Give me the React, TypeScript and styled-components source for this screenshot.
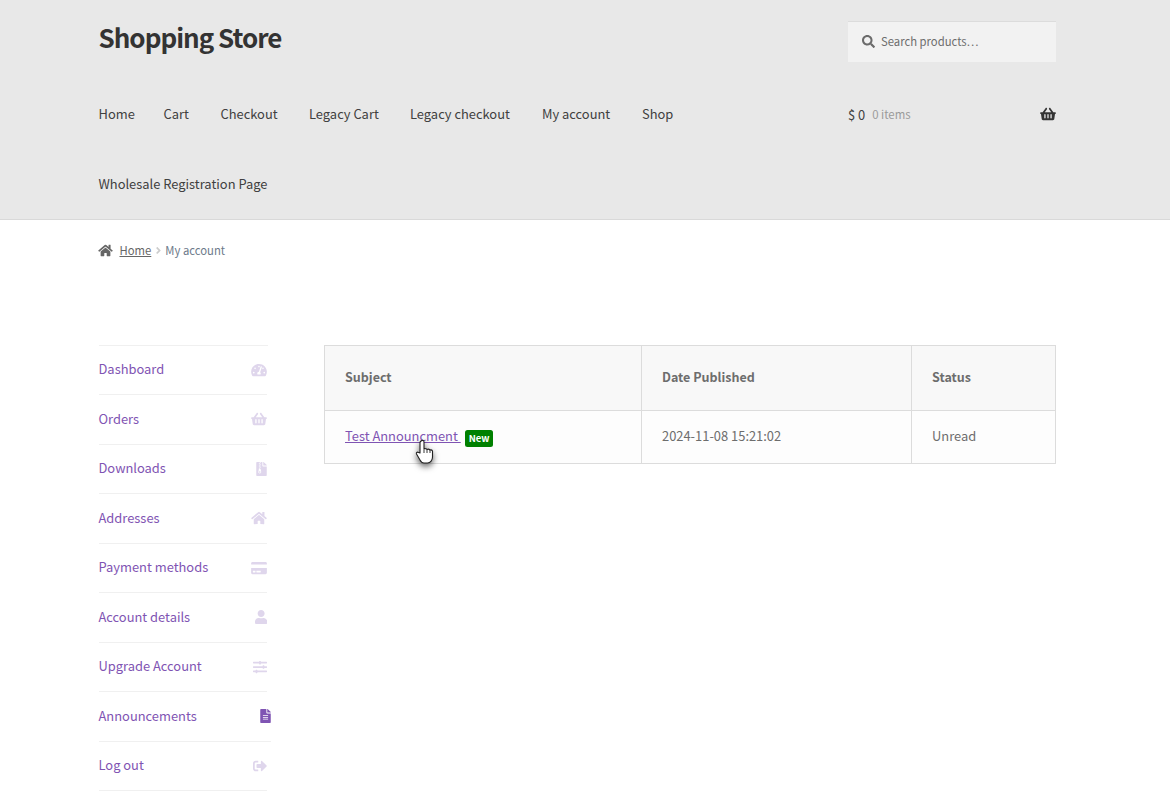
import React from "react";
import styled, { createGlobalStyle } from "styled-components";
import { FaTachometerAlt, FaShoppingBasket, FaFileArchive, FaHome, FaCreditCard, FaUser, FaSlidersH, FaFileAlt, FaSignOutAlt, FaSearch, FaAngleRight } from "react-icons/fa";

const Global = createGlobalStyle`
  html, body { margin: 0; padding: 0; background: #fff; }
  body { font-family: "Noto Sans CJK SC", "Noto Sans", sans-serif; color: #6d6d6d; font-size: 13px; }
  a { text-decoration: none; color: inherit; }
`;

const Page = styled.div`width: 1170px; height: 808px; overflow: hidden;`;
const Header = styled.header`
  height: 219px; background: #e8e8e8; border-bottom: 1px solid #d9d9d9;
  padding: 0 114px 0 98.500px; display: flex; flex-direction: column;
`;
const TopRow = styled.div`display: flex; justify-content: space-between; padding-top: 21px; height: 79px;`;
const Title = styled.div`font-size: 26px; font-weight: 700; letter-spacing: -1px; color: #333; line-height: 34px; margin-top: -1px;`;
const Search = styled.div`
  width: 208px; height: 41px; box-sizing: border-box; background: #f2f2f2; border-top: 1px solid #dcdcdc;
  display: flex; align-items: center; gap: 6px; padding: 0 0 2px 14px; font-size: 11.300px; color: #6d6d6d;
  svg { width: 13px; height: 13px; color: #6b6b6b; }
`;
const NavArea = styled.div`display: flex; justify-content: space-between;`;
const Nav = styled.nav`width: 700px; display: flex; flex-wrap: wrap; margin-top: -5px;`;
const NavItem = styled.a<{ $w: number }>`
  width: ${p => p.$w}px; height: 70px; line-height: 70px; font-size: 12.900px; color: #404040; white-space: nowrap;
`;
const Cart = styled.div`
  width: 208px; height: 70px; margin-top: -5px; display: flex; align-items: center; color: #404040; font-size: 12.900px;
  svg { width: 16px; height: 14px; color: #333; margin-left: auto; }
`;
const Count = styled.span`font-size: 11.400px; color: #9a9a9a; margin-left: 7px;`;
const Crumbs = styled.div`
  height: 125px; padding: 20px 98px 0; box-sizing: border-box; display: flex; align-items: flex-start; font-size: 11.300px; color: #6d7a8a; line-height: 20px;
`;
const CrumbIcon = styled.span`
  display: inline-flex; width: 21.500px; height: 20px; align-items: center; color: #666;
  svg { width: 15px; height: 13px; }
`;
const CrumbLink = styled.a`color: #666; text-decoration: underline;`;
const CrumbSep = styled.span`
  display: inline-flex; width: 14px; height: 20px; align-items: center; justify-content: center; color: #ccc;
  svg { width: 9px; height: 11px; }
`;
const Main = styled.div`display: flex; align-items: flex-start; padding: 0 114px 0 98.500px; gap: 56px;`;
const Side = styled.ul`list-style: none; margin: -0.4px 0 0; padding: 0; width: 169.500px; flex: none; border-top: 1px solid #f0f0f0;`;
const SideRow = styled.li<{ $active?: boolean }>`
  height: 48.500px; border-bottom: 1px solid #f0f0f0; display: flex; align-items: center; justify-content: space-between;
  font-size: 12.900px; color: #7f54b3; white-space: nowrap; margin-right: ${p => (p.$active ? "-3px" : "1px")};
`;
const SideLabel = styled.span`padding-bottom: 2px;`;
const SideIcon = styled.span<{ $w: number; $active?: boolean }>`
  display: flex; color: ${p => (p.$active ? "#7f54b3" : "#dfd6ec")};
  svg { width: ${p => p.$w}px; height: 14px; }
`;
const Table = styled.table`
  width: 731px; height: 119px; flex: none; border-collapse: collapse; table-layout: fixed; border: 1px solid #dcdcdc; font-size: 12.900px;
`;
const Th = styled.th<{ $w: number }>`
  width: ${p => p.$w}px; height: 65px; box-sizing: border-box; background: #f8f8f8; border: 1px solid #dcdcdc; text-align: left; padding: 0 20px 4px; font-weight: 600; font-size: 12.500px; color: #6d6d6d;
`;
const Td = styled.td`background: #fdfdfd; border: 1px solid #dcdcdc; padding: 0 20px 3px; color: #6d6d6d; position: relative;`;
const TitleLink = styled.a`color: #7f54b3; text-decoration: underline; white-space: pre;`;
const Badge = styled.span`
  display: inline-block; background: #008000; color: #fff; font-size: 9.500px; font-weight: 700; line-height: 17px; height: 17px; padding: 0 3.500px; border-radius: 2.500px; margin: -4px 0 -4px 4.500px; vertical-align: -0.5px;
`;
const Pointer = styled.svg`position: absolute; left: 90px; top: 28px; width: 20px; height: 26px; filter: drop-shadow(0 3px 3px rgba(0,0,0,.6));`;

const items: [string, React.ReactNode, number, boolean?][] = [
  ["Dashboard", <FaTachometerAlt />, 16],
  ["Orders", <FaShoppingBasket />, 16],
  ["Downloads", <FaFileArchive />, 11],
  ["Addresses", <FaHome />, 16],
  ["Payment methods", <FaCreditCard />, 16],
  ["Account details", <FaUser />, 12.250],
  ["Upgrade Account", <FaSlidersH />, 14],
  ["Announcements", <FaFileAlt />, 11, true],
  ["Log out", <FaSignOutAlt />, 14],
];
const nav: [string, number][] = [["Home", 65], ["Cart", 57], ["Checkout", 88.500], ["Legacy Cart", 101], ["Legacy checkout", 132], ["My account", 100], ["Shop", 100], ["Wholesale Registration Page", 300]];

export default function App() {
  return (
    <Page>
      <Global />
      <Header>
        <TopRow>
          <Title>Shopping Store</Title>
          <Search><FaSearch /><span>Search products…</span></Search>
        </TopRow>
        <NavArea>
          <Nav>{nav.map(([t, w]) => <NavItem key={t} $w={w}>{t}</NavItem>)}</Nav>
          <Cart><span>$ 0</span><Count>0 items</Count><FaShoppingBasket /></Cart>
        </NavArea>
      </Header>
      <Crumbs>
        <CrumbIcon><FaHome /></CrumbIcon>
        <CrumbLink>Home</CrumbLink>
        <CrumbSep><FaAngleRight /></CrumbSep>
        <span>My account</span>
      </Crumbs>
      <Main>
        <Side>
          {items.map(([t, ic, w, a]) => (
            <SideRow key={t} $active={a}><SideLabel>{t}</SideLabel><SideIcon $w={w} $active={a}>{ic}</SideIcon></SideRow>
          ))}
        </Side>
        <Table>
          <thead>
            <tr><Th $w={317}>Subject</Th><Th $w={270}>Date Published</Th><Th $w={144}>Status</Th></tr>
          </thead>
          <tbody>
            <tr>
              <Td>
                <TitleLink>Test Announcment </TitleLink><Badge>New</Badge>
                <Pointer viewBox="0 0 20 26">
                  <path d="M6 2c1-1 3-1 3 1v7l1-.5c1 0 2 0 2 1 1-.5 2-.5 3 .5 1-.3 2 0 2.500 1v6c0 3-2 6-5 6H9c-2 0-3-1-4-3l-3.500-6c-.5-1 .5-2.500 2-1.500L5 14V3.500C5 3 5.500 2.500 6 2z" fill="#fff" stroke="#222" strokeWidth="1.100" strokeLinejoin="round" />
                  <path d="M9 10.500v3.500M12 10.500v3.500M15 11v3" stroke="#222" strokeWidth="0.900" />
                </Pointer>
              </Td>
              <Td>2024-11-08 15:21:02</Td>
              <Td>Unread</Td>
            </tr>
          </tbody>
        </Table>
      </Main>
    </Page>
  );
}
